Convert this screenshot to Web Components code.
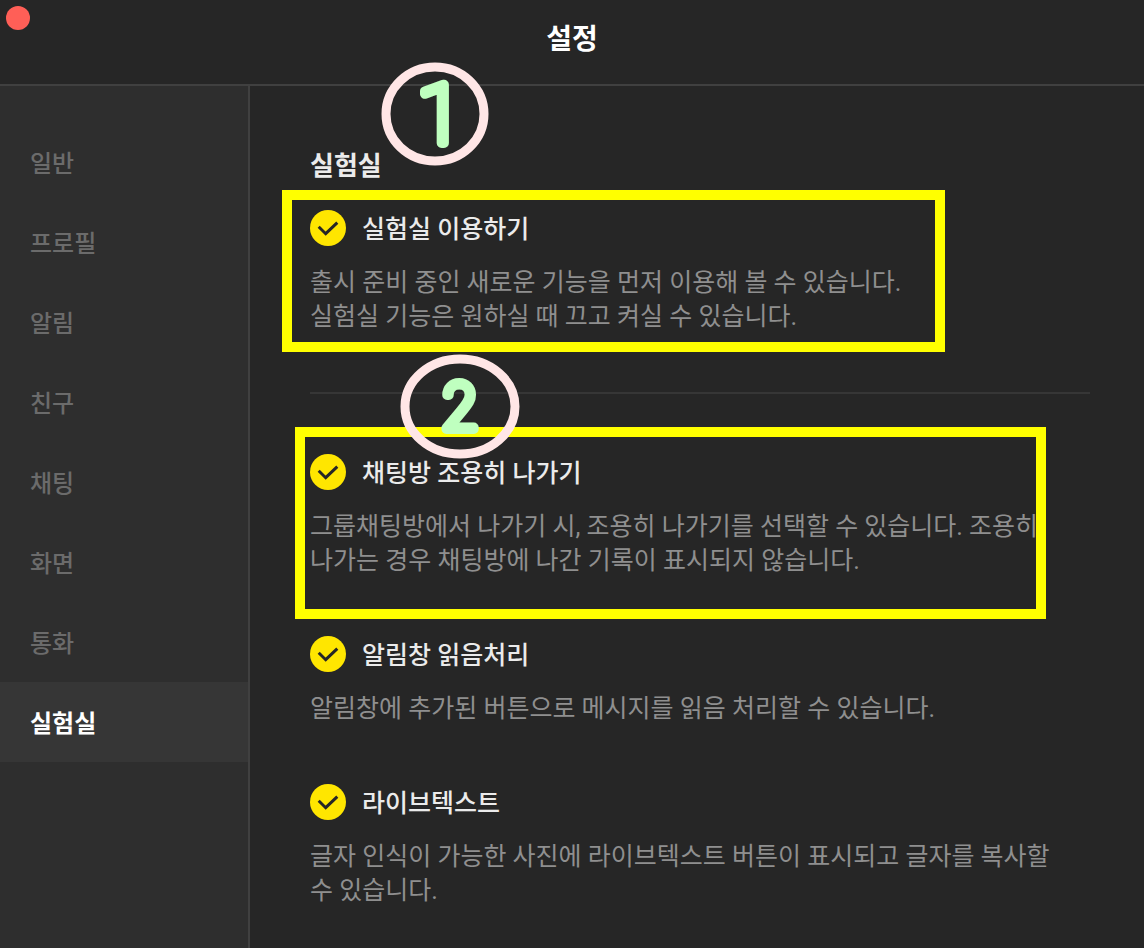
<!DOCTYPE html>
<html lang="ko">
<head>
<meta charset="utf-8">
<title>설정</title>
<style>
  html, body { margin: 0; min-height: 100%; background: #262626; }
  body {
    font-family: Roboto, "Noto Sans CJK KR", sans-serif;
    color: #ebebeb;
  }
</style>
</head>
<body>
<settings-window heading="설정">
  <settings-nav slot="nav">
    <nav-item>일반</nav-item>
    <nav-item>프로필</nav-item>
    <nav-item>알림</nav-item>
    <nav-item>친구</nav-item>
    <nav-item>채팅</nav-item>
    <nav-item>화면</nav-item>
    <nav-item>통화</nav-item>
    <nav-item active>실험실</nav-item>
  </settings-nav>
  <settings-section heading="실험실">
    <number-badge class="one" slot="note" value="1"></number-badge>
    <setting-toggle label="실험실 이용하기">
      출시 준비 중인 새로운 기능을 먼저 이용해 볼 수 있습니다.<br>실험실 기능은 원하실 때 끄고 켜실 수 있습니다.
      <highlight-frame slot="note" class="lab"></highlight-frame>
    </setting-toggle>
    <section-divider></section-divider>
    <setting-toggle label="채팅방 조용히 나가기">
      그룹채팅방에서 나가기 시, 조용히 나가기를 선택할 수 있습니다. 조용히 나가는 경우 채팅방에 나간 기록이 표시되지 않습니다.
      <highlight-frame slot="note" class="leave"></highlight-frame>
      <number-badge slot="note" class="two" value="2"></number-badge>
    </setting-toggle>
    <setting-toggle label="알림창 읽음처리">알림창에 추가된 버튼으로 메시지를 읽음 처리할 수 있습니다.</setting-toggle>
    <setting-toggle label="라이브텍스트">글자 인식이 가능한 사진에 라이브텍스트 버튼이 표시되고 글자를 복사할 수 있습니다.</setting-toggle>
  </settings-section>
</settings-window>

<script>
function define(name, markup, setup) {
  const template = document.createElement('template');
  template.innerHTML = markup;
  customElements.define(name, class extends HTMLElement {
    connectedCallback() {
      if (this.shadowRoot) return;
      const root = this.attachShadow({ mode: 'open' });
      root.append(template.content.cloneNode(true));
      if (setup) setup(this, root);
    }
  });
}

define('settings-window', `
  <style>
    :host { display: flex; flex-direction: column; min-height: 100vh; background: #262626; }
    header {
      position: relative; box-sizing: border-box; height: 86px; padding-bottom: 4px;
      display: flex; align-items: center; justify-content: center;
      border-bottom: 2px solid #404040;
    }
    h1 { margin: 0; font-size: 28px; line-height: 40px; font-weight: 700; color: #fff; }
    button {
      position: absolute; left: 6px; top: 6px; width: 24px; height: 24px;
      padding: 0; border: 0; border-radius: 50%; background: #ff5f57;
    }
    .body { flex: 1; display: flex; }
    main { flex: 1; min-width: 0; }
  </style>
  <header><button type="button" aria-label="닫기"></button><h1></h1></header>
  <div class="body"><slot name="nav"></slot><main><slot></slot></main></div>`,
  (host, root) => { root.querySelector('h1').textContent = host.getAttribute('heading'); });

define('settings-nav', `
  <style>
    :host {
      display: block; flex: none; width: 248px; padding-top: 36px;
      background: #2e2e2e; border-right: 2px solid #404040;
    }
    nav { display: flex; flex-direction: column; }
  </style>
  <nav><slot></slot></nav>`);

define('nav-item', `
  <style>
    :host { display: block; }
    a {
      display: flex; align-items: center; box-sizing: border-box; height: 80px;
      padding: 4px 0 0 30px;
      font-size: 24px; line-height: 34px; font-weight: 500;
      color: #6b6b6b; text-decoration: none;
    }
    :host([active]) a { background: #363636; color: #fff; font-weight: 700; }
  </style>
  <a href="#"><slot></slot></a>`);

define('settings-section', `
  <style>
    :host { display: block; padding: 62px 54px 40px 60px; }
    .top { position: relative; margin-bottom: 26px; }
    h2 { margin: 0; font-size: 26px; line-height: 36px; font-weight: 700; }
    .list { display: flex; flex-direction: column; gap: 58px; }
    ::slotted(.one) { left: 71px; top: -86px; }
    ::slotted(section-divider) { margin-bottom: 2px; }
  </style>
  <div class="top"><h2></h2><slot name="note"></slot></div>
  <div class="list"><slot></slot></div>`,
  (host, root) => { root.querySelector('h2').textContent = host.getAttribute('heading'); });

define('section-divider', `
  <style>:host { display: block; height: 2px; background: #363636; }</style>`);

define('setting-toggle', `
  <style>
    :host { display: block; position: relative; }
    .row { display: flex; align-items: center; gap: 16px; }
    .box { display: grid; flex: none; width: 36px; height: 36px; }
    .box > * { grid-area: 1 / 1; }
    input { appearance: none; margin: 0; width: 36px; height: 36px; border-radius: 50%; background: #4a4a4a; }
    input:checked { background: #ffe600; }
    svg { width: 36px; height: 36px; pointer-events: none; }
    input:not(:checked) + svg { display: none; }
    label { padding-top: 4px; font-size: 25px; line-height: 32px; font-weight: 500; color: #ebebeb; }
    p {
      margin: 20px 0 0; max-width: 750px; font-size: 25px; line-height: 34px;
      color: #8f8f8f; word-break: keep-all;
    }
    ::slotted(.lab) { inset: -20px 145px -18px -28px; }
    ::slotted(.leave) { inset: -27px 44px -41px -15px; }
    ::slotted(.two) { left: 90px; top: -100px; }
  </style>
  <div class="row">
    <span class="box">
      <input type="checkbox" id="toggle" aria-describedby="about" checked>
      <svg viewBox="0 0 36 36" aria-hidden="true"><path d="M8.7 16.8 15.7 23.7 27.3 12.6" fill="none" stroke="#262626" stroke-width="3"/></svg>
    </span>
    <label for="toggle"></label>
  </div>
  <p id="about"><slot></slot></p>
  <slot name="note"></slot>`,
  (host, root) => { root.querySelector('label').textContent = host.getAttribute('label'); });

define('highlight-frame', `
  <style>
    :host { display: block; position: absolute; box-sizing: border-box; border: 10px solid #ffff00; pointer-events: none; }
  </style>`);

define('number-badge', `
  <style>
    :host { display: block; position: absolute; z-index: 1; pointer-events: none; }
    svg { display: block; }
    ellipse { fill: none; stroke: #ffe6e6; stroke-width: 9; }
    text {
      text-anchor: middle;
      fill: #bfffbf; stroke: #bfffbf; stroke-linejoin: round; stroke-linecap: round;
    }
  </style>
  <svg></svg>`,
  (host, root) => {
    const value = host.getAttribute('value');
    const shape = value === '1'
      ? { w: 108, h: 104, font: 'Roboto', weight: 100, size: 82, x: 59, y: 81, stroke: 10 }
      : { w: 120, h: 105, font: 'Inter', weight: 100, size: 62, x: 60, y: 75, stroke: 10 };
    const svg = root.querySelector('svg');
    svg.setAttribute('width', shape.w);
    svg.setAttribute('height', shape.h);
    svg.innerHTML = `<ellipse cx="${shape.w / 2}" cy="${shape.h / 2}" rx="${shape.w / 2 - 5}" ry="${shape.h / 2 - 5}"/>
      <text x="${shape.x}" y="${shape.y}" font-family="${shape.font}, sans-serif" font-weight="${shape.weight}" font-size="${shape.size}" stroke-width="${shape.stroke}">${value}</text>`;
  });
</script>
</body>
</html>
